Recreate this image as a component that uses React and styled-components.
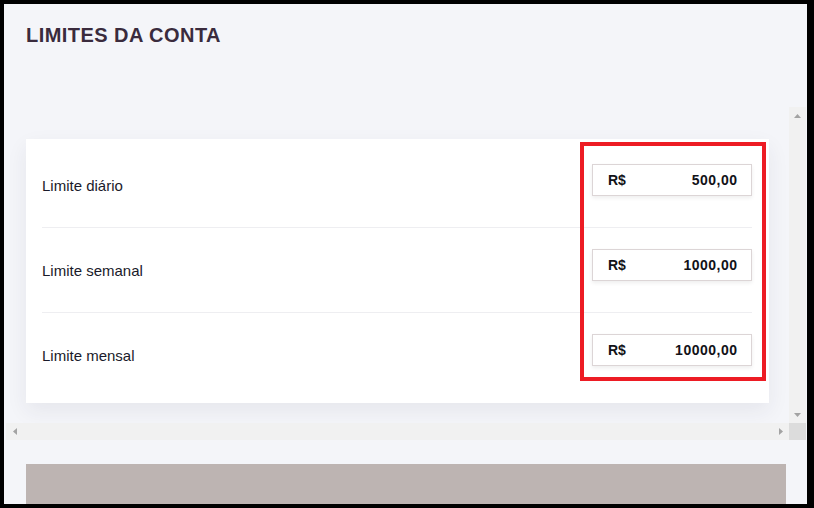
import styled, { createGlobalStyle } from "styled-components";

const GlobalStyle = createGlobalStyle`
  html, body {
    margin: 0;
    padding: 0;
    background: #000;
  }
  * {
    box-sizing: border-box;
  }
`;

const Frame = styled.div`
  width: 814px;
  height: 508px;
  border: 4px solid #000;
  border-right-width: 7px;
  overflow: hidden;
  background-color: #f4f5f9;
  font-family: "Liberation Sans", Arial, sans-serif;
`;

const Page = styled.div`
  display: flex;
  flex-direction: column;
  padding-top: 19px;
`;

const Title = styled.h1`
  margin: 0 0 60px 22px;
  font-size: 20px;
  line-height: 24px;
  font-weight: 700;
  letter-spacing: 0.45px;
  color: #3a2b3d;
`;

// scroll box with classic scrollbars drawn by hand
const ScrollFrame = styled.div`
  margin: 0 1px 0 2px;
  height: 333px;
  display: grid;
  grid-template-columns: 1fr 17px;
  grid-template-rows: 1fr 17px;
`;

const ScrollContent = styled.div`
  overflow: hidden;
  padding: 32px 20px 20px;
`;

const ScrollBar = styled.div`
  display: flex;
  flex-direction: ${(p) => (p.vertical ? "column" : "row")};
  justify-content: space-between;
  background-color: #f1f1f1;
`;

const ScrollButton = styled.div`
  width: 17px;
  height: 17px;
  display: flex;
  align-items: center;
  justify-content: center;
`;

const Corner = styled.div`
  background-color: #dcdcdc;
`;

const Arrow = ({ dir }) => {
  const pts = {
    up: "3.5,0 7,4 0,4",
    down: "0,0 7,0 3.5,4",
    left: "0,3.5 4,0 4,7",
    right: "0,0 4,3.5 0,7",
  }[dir];
  const vertical = dir === "up" || dir === "down";
  return (
    <svg width={vertical ? 7 : 4} height={vertical ? 4 : 7} viewBox={vertical ? "0 0 7 4" : "0 0 4 7"}>
      <polygon points={pts} fill="#a3a3a3" />
    </svg>
  );
};

const Card = styled.div`
  position: relative;
  width: 743px;
  background-color: #fff;
  padding: 4px 17px 5px 16px;
  box-shadow: 0 8px 20px rgba(40, 40, 70, 0.07);
`;

const Row = styled.div`
  height: 85px;
  display: flex;
  justify-content: space-between;
  align-items: flex-start;
  padding-top: 21px;
  border-bottom: ${(p) => (p.last ? "none" : "1px solid #eeeef1")};
`;

const Label = styled.span`
  align-self: center;
  margin-top: -21px;
  font-size: 15px;
  color: #1a1a2a;
`;

const Amount = styled.div`
  width: 160px;
  height: 32px;
  display: flex;
  align-items: center;
  justify-content: space-between;
  padding: 0 14px 0 15px;
  border: 1px solid #dcd5d6;
  box-shadow: 0 2px 4px rgba(0, 0, 0, 0.07);
  font-size: 14px;
  font-weight: 700;
  color: #121218;
`;

const Value = styled.span`
  letter-spacing: 0.5px;
  margin-right: -0.5px;
`;

const Highlight = styled.div`
  position: absolute;
  left: 554px;
  top: 3px;
  width: 186px;
  height: 239px;
  border: 4px solid #ed1c24;
  pointer-events: none;
`;

const BottomPanel = styled.div`
  margin: 24px 21px 0 22px;
  height: 60px;
  background-color: #bdb4b2;
`;

const limits = [
  { label: "Limite diário", value: "500,00" },
  { label: "Limite semanal", value: "1000,00" },
  { label: "Limite mensal", value: "10000,00" },
];

export default function App() {
  return (
    <>
      <GlobalStyle />
      <Frame>
        <Page>
          <Title>LIMITES DA CONTA</Title>
          <ScrollFrame>
            <ScrollContent>
              <Card>
                {limits.map((item, i) => (
                  <Row key={item.label} last={i === limits.length - 1}>
                    <Label>{item.label}</Label>
                    <Amount>
                      <span>R$</span>
                      <Value>{item.value}</Value>
                    </Amount>
                  </Row>
                ))}
                <Highlight />
              </Card>
            </ScrollContent>
            <ScrollBar vertical>
              <ScrollButton>
                <Arrow dir="up" />
              </ScrollButton>
              <ScrollButton>
                <Arrow dir="down" />
              </ScrollButton>
            </ScrollBar>
            <ScrollBar>
              <ScrollButton>
                <Arrow dir="left" />
              </ScrollButton>
              <ScrollButton>
                <Arrow dir="right" />
              </ScrollButton>
            </ScrollBar>
            <Corner />
          </ScrollFrame>
          <BottomPanel />
        </Page>
      </Frame>
    </>
  );
}
